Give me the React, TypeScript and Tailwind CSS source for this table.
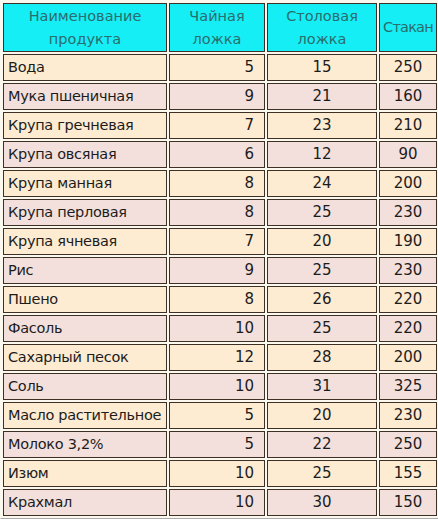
const rows: [string, number, number, number][] = [
  ["Вода", 5, 15, 250],
  ["Мука пшеничная", 9, 21, 160],
  ["Крупа гречневая", 7, 23, 210],
  ["Крупа овсяная", 6, 12, 90],
  ["Крупа манная", 8, 24, 200],
  ["Крупа перловая", 8, 25, 230],
  ["Крупа ячневая", 7, 20, 190],
  ["Рис", 9, 25, 230],
  ["Пшено", 8, 26, 220],
  ["Фасоль", 10, 25, 220],
  ["Сахарный песок", 12, 28, 200],
  ["Соль", 10, 31, 325],
  ["Масло растительное", 5, 20, 230],
  ["Молоко 3,2%", 5, 22, 250],
  ["Изюм", 10, 25, 155],
  ["Крахмал", 10, 30, 150],
];

const cell = "border border-[#3e3024] p-0";
const head = `${cell} bg-[#16eef6] text-[#2a6d6c] text-center font-normal text-[14.5px] leading-[23px] h-[49px]`;

export default function App() {
  return (
    <div className="w-[438px] h-[519px] bg-[#fbf8f0] overflow-hidden">
      <table
        className="border-separate border-spacing-[2px] border border-r-[#a9a9a9] border-b-[#a9a9a9] border-t-transparent border-l-transparent text-[15px] text-[#1c1c1c] table-fixed w-[438px]"
        style={{ fontFamily: '"DejaVu Sans", "Noto Sans", sans-serif' }}
      >
        <colgroup>
          <col className="w-[164px]" />
          <col className="w-[96px]" />
          <col className="w-[110px]" />
          <col className="w-[58px]" />
        </colgroup>
        <thead>
          <tr>
            <th className={head}>
              Наименование
              <br />
              продукта
            </th>
            <th className={head}>
              Чайная
              <br />
              ложка
            </th>
            <th className={head}>
              Столовая
              <br />
              ложка
            </th>
            <th className={`${head} tracking-[-0.8px]`}>Стакан</th>
          </tr>
        </thead>
        <tbody>
          {rows.map(([name, tea, table, glass], i) => {
            const bg = i % 2 === 0 ? "bg-[#fdebd2]" : "bg-[#f3e0dc]";
            return (
              <tr key={name} className="h-[27px]">
                <td className={`${cell} ${bg} pl-[4px] whitespace-nowrap text-[14.5px] tracking-[-0.3px]`}>{name}</td>
                <td className={`${cell} ${bg} text-right pr-[10px]`}>{tea}</td>
                <td className={`${cell} ${bg} text-center`}>{table}</td>
                <td className={`${cell} ${bg} text-center`}>{glass}</td>
              </tr>
            );
          })}
        </tbody>
      </table>
    </div>
  );
}
